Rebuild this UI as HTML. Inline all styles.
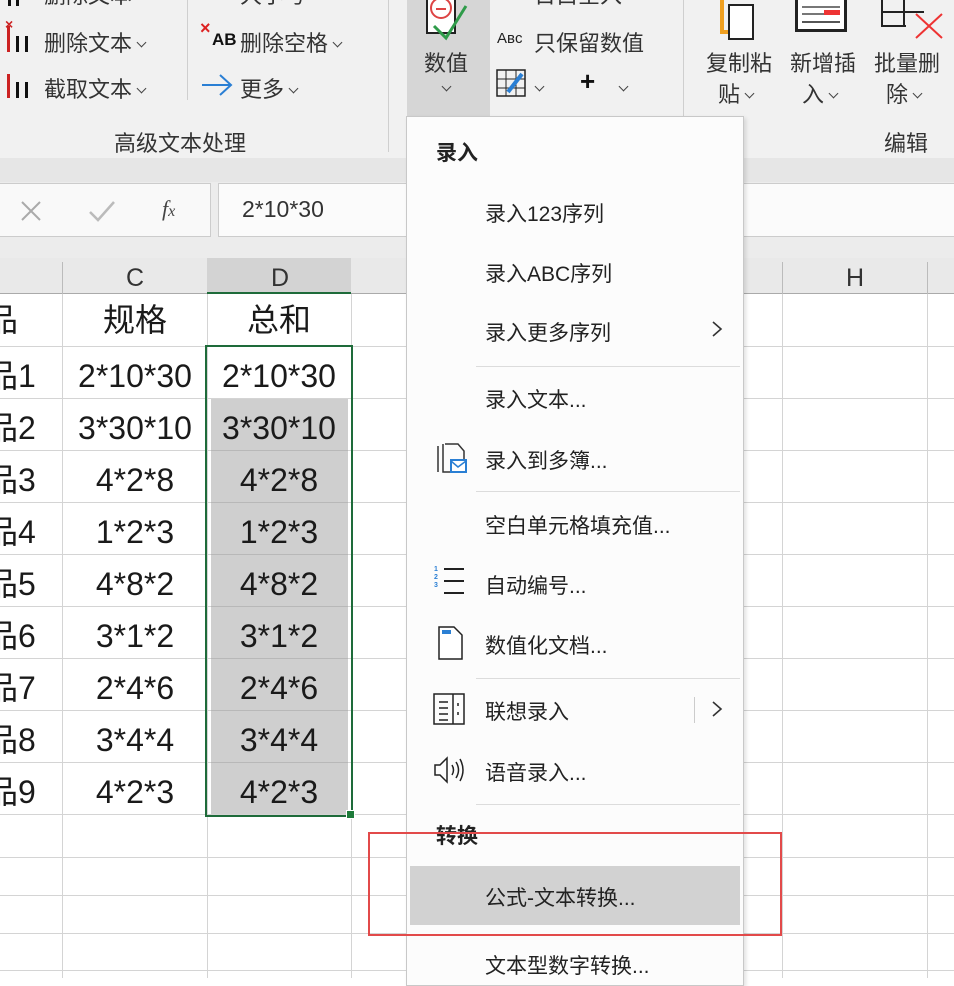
<!DOCTYPE html>
<html><head><meta charset="utf-8"><style>
*{margin:0;padding:0;box-sizing:border-box}
body{width:954px;height:978px;overflow:hidden;background:#fff;position:relative;font-family:"Liberation Sans","Noto Sans CJK SC",sans-serif;color:#222}
.a{position:absolute;white-space:nowrap}
.rb{font-size:22px;color:#333}
.vl{position:absolute;width:1px;background:#d4d4d4}
.hln{position:absolute;height:1px;background:#d4d4d4}
.cell{position:absolute;font-size:32px;text-align:center;line-height:52px;height:52px;color:#1a1a1a}
.mi{position:absolute;left:485px;font-size:21px;color:#222;white-space:nowrap}
.sep{position:absolute;left:476px;width:264px;height:1px;background:#dcdcdc}
.chev{display:inline-block;width:7px;height:7px;border-right:1.5px solid #444;border-bottom:1.5px solid #444;transform:rotate(45deg);vertical-align:middle;margin:-6px 0 0 6px}
</style></head><body>
<div class="a" style="left:0;top:0;width:954px;height:160px;background:#f1f1f1"></div>
<div class="a" style="left:0;top:158px;width:954px;height:24px;background:#e6e6e6"></div>
<div class="a" style="left:187px;top:0;width:1px;height:100px;background:#cfcfcf"></div>
<div class="a" style="left:388px;top:0;width:1px;height:152px;background:#cfcfcf"></div>
<div class="a" style="left:683px;top:0;width:1px;height:160px;background:#cfcfcf"></div>
<div class="a" style="left:407px;top:0;width:83px;height:116px;background:#d6d6d6"></div>
<div class="a rb" style="left:44px;top:-22px">删除文本</div>
<div class="a rb" style="left:240px;top:-22px">大小写</div>
<div class="a rb" style="left:534px;top:-22px">日白全入</div>
<div class="a" style="left:8px;top:0;width:3px;height:6px;background:#111"></div>
<div class="a" style="left:16px;top:0;width:3px;height:6px;background:#111"></div>
<div class="a" style="left:7px;top:26px;width:3px;height:26px;background:#c22"></div>
<div class="a" style="left:5px;top:16px;color:#c22;font-size:14px;font-weight:bold">×</div>
<div class="a" style="left:16px;top:36px;width:3px;height:16px;background:#111"></div>
<div class="a" style="left:25px;top:36px;width:3px;height:16px;background:#111"></div>
<div class="a" style="left:7px;top:74px;width:3px;height:24px;background:#c22"></div>
<div class="a" style="left:16px;top:82px;width:3px;height:16px;background:#111"></div>
<div class="a" style="left:25px;top:82px;width:3px;height:16px;background:#111"></div>
<div class="a rb" style="left:44px;top:26px">删除文本<span class="chev"></span></div>
<div class="a rb" style="left:44px;top:72px">截取文本<span class="chev"></span></div>
<div class="a" style="left:200px;top:18px;color:#d22;font-size:18px;font-weight:bold">×</div>
<div class="a" style="left:212px;top:30px;font-size:17px;font-weight:bold;color:#111">AB</div>
<div class="a rb" style="left:240px;top:26px">删除空格<span class="chev"></span></div>
<svg class="a" style="left:200px;top:72px" width="34" height="26"><path d="M2 13H30M20 3L31 13L20 23" stroke="#2a7fd4" stroke-width="2" fill="none"/></svg>
<div class="a rb" style="left:240px;top:72px">更多<span class="chev"></span></div>
<div class="a rb" style="left:114px;top:126px">高级文本处理</div>
<div class="a" style="left:426px;top:0;width:30px;height:34px;background:#fff;border:2px solid #222;border-top:none"></div>
<div class="a" style="left:430px;top:-3px;width:22px;height:22px;border:2px solid #d44;border-radius:50%"></div>
<div class="a" style="left:436px;top:8px;width:10px;height:2px;background:#d44"></div>
<svg class="a" style="left:430px;top:0" width="40" height="42"><path d="M4 26 L16 38 L36 6" stroke="#2f9c4a" stroke-width="3" fill="none"/></svg>
<div class="a rb" style="left:424px;top:46px">数值</div>
<div class="a" style="left:443px;top:78px"><span class="chev" style="margin:0"></span></div>
<div class="a" style="left:497px;top:30px;font-size:15px;color:#222">Aʙc</div>
<div class="a rb" style="left:534px;top:26px">只保留数值</div>
<svg class="a" style="left:496px;top:68px" width="32" height="30"><rect x="1" y="2" width="28" height="26" fill="none" stroke="#222" stroke-width="1.5"/><path d="M1 11H29M1 20H29M10 2V28M20 2V28" stroke="#222"/><path d="M12 24 L26 6" stroke="#2a7fd4" stroke-width="4"/></svg>
<div class="a" style="left:536px;top:78px"><span class="chev" style="margin:0"></span></div>
<div class="a" style="left:580px;top:66px;font-size:26px;font-weight:bold;color:#111">+</div>
<div class="a" style="left:620px;top:78px"><span class="chev" style="margin:0"></span></div>
<div class="a" style="left:720px;top:0;width:4px;height:34px;background:#f0a020"></div>
<div class="a" style="left:720px;top:30px;width:20px;height:4px;background:#f0a020"></div>
<div class="a" style="left:728px;top:4px;width:26px;height:36px;background:#fff;border:2px solid #222"></div>
<div class="a" style="left:795px;top:0;width:52px;height:32px;border:3px solid #222;border-top:none;background:#fff"></div>
<div class="a" style="left:802px;top:6px;width:38px;height:2px;background:#777"></div>
<div class="a" style="left:802px;top:13px;width:22px;height:2px;background:#777"></div>
<div class="a" style="left:824px;top:10px;width:16px;height:5px;background:#e33"></div>
<div class="a" style="left:802px;top:21px;width:38px;height:2px;background:#555"></div>
<svg class="a" style="left:880px;top:0" width="64" height="40"><path d="M2 0V26H26M2 12H44M24 0V26" stroke="#222" stroke-width="2" fill="none"/><path d="M36 14L62 38M62 14L36 38" stroke="#e33" stroke-width="2"/></svg>
<div class="a rb" style="left:706px;top:46px">复制粘</div>
<div class="a rb" style="left:718px;top:77px">贴<span class="chev"></span></div>
<div class="a rb" style="left:790px;top:46px">新增插</div>
<div class="a rb" style="left:802px;top:77px">入<span class="chev"></span></div>
<div class="a rb" style="left:874px;top:46px">批量删</div>
<div class="a rb" style="left:886px;top:77px">除<span class="chev"></span></div>
<div class="a rb" style="left:884px;top:126px">编辑</div>
<div class="a" style="left:0;top:182px;width:954px;height:76px;background:#ececec"></div>
<div class="a" style="left:-2px;top:183px;width:213px;height:54px;background:#f9f9f9;border:1px solid #ccc"></div>
<div class="a" style="left:218px;top:183px;width:740px;height:54px;background:#fbfbfb;border:1px solid #ccc"></div>
<svg class="a" style="left:20px;top:200px" width="22" height="22"><path d="M2 2L20 20M20 2L2 20" stroke="#aaa" stroke-width="2"/></svg>
<svg class="a" style="left:88px;top:200px" width="28" height="22"><path d="M2 12L10 20L26 2" stroke="#bbb" stroke-width="2.5" fill="none"/></svg>
<div class="a" style="left:162px;top:196px;font-size:22px;font-style:italic;font-family:'Liberation Serif',serif;color:#444">f<span style="font-size:16px">x</span></div>
<div class="a" style="left:242px;top:196px;font-size:23px;color:#333">2*10*30</div>
<div class="a" style="left:0;top:258px;width:954px;height:36px;background:#e9e9e9;border-bottom:1px solid #aaa"></div>
<div class="a" style="left:207px;top:258px;width:144px;height:36px;background:#d3d3d3;border-bottom:2px solid #1e6b3a"></div>
<div class="vl" style="left:62px;top:262px;height:32px;background:#bbb"></div>
<div class="vl" style="left:782px;top:262px;height:32px;background:#bbb"></div>
<div class="vl" style="left:927px;top:262px;height:32px;background:#bbb"></div>
<div class="a" style="left:126px;top:264px;font-size:25px;color:#333">C</div>
<div class="a" style="left:271px;top:264px;font-size:25px;color:#333">D</div>
<div class="a" style="left:846px;top:264px;font-size:25px;color:#333">H</div>
<div class="vl" style="left:62px;top:294px;height:684px"></div>
<div class="vl" style="left:207px;top:294px;height:684px"></div>
<div class="vl" style="left:351px;top:294px;height:684px"></div>
<div class="vl" style="left:782px;top:294px;height:684px"></div>
<div class="vl" style="left:927px;top:294px;height:684px"></div>
<div class="hln" style="left:0;top:346px;width:954px"></div>
<div class="hln" style="left:0;top:398px;width:954px"></div>
<div class="hln" style="left:0;top:450px;width:954px"></div>
<div class="hln" style="left:0;top:502px;width:954px"></div>
<div class="hln" style="left:0;top:554px;width:954px"></div>
<div class="hln" style="left:0;top:606px;width:954px"></div>
<div class="hln" style="left:0;top:658px;width:954px"></div>
<div class="hln" style="left:0;top:710px;width:954px"></div>
<div class="hln" style="left:0;top:762px;width:954px"></div>
<div class="hln" style="left:0;top:814px;width:954px"></div>
<div class="hln" style="left:0;top:857px;width:954px"></div>
<div class="hln" style="left:0;top:895px;width:954px"></div>
<div class="hln" style="left:0;top:933px;width:954px"></div>
<div class="hln" style="left:0;top:970px;width:954px"></div>
<div class="a" style="left:211px;top:399px;width:137px;height:415px;background:#cfcfcf"></div>
<div class="hln" style="left:211px;top:450px;width:137px;background:#b8b8b8"></div>
<div class="hln" style="left:211px;top:502px;width:137px;background:#b8b8b8"></div>
<div class="hln" style="left:211px;top:554px;width:137px;background:#b8b8b8"></div>
<div class="hln" style="left:211px;top:606px;width:137px;background:#b8b8b8"></div>
<div class="hln" style="left:211px;top:658px;width:137px;background:#b8b8b8"></div>
<div class="hln" style="left:211px;top:710px;width:137px;background:#b8b8b8"></div>
<div class="hln" style="left:211px;top:762px;width:137px;background:#b8b8b8"></div>
<div class="a" style="left:205px;top:345px;width:148px;height:472px;border:2px solid #1e6b3a"></div>
<div class="a" style="left:346px;top:810px;width:9px;height:9px;background:#1e7b3a;border:1px solid #fff"></div>
<div class="cell" style="left:-14px;top:294px;width:60px;text-align:left;font-size:32px">品</div>
<div class="cell" style="left:63px;top:294px;width:144px;font-size:32px">规格</div>
<div class="cell" style="left:207px;top:294px;width:144px;font-size:32px">总和</div>
<div class="cell" style="left:-14px;top:350px;text-align:left">品1</div>
<div class="cell" style="left:-14px;top:402px;text-align:left">品2</div>
<div class="cell" style="left:-14px;top:454px;text-align:left">品3</div>
<div class="cell" style="left:-14px;top:506px;text-align:left">品4</div>
<div class="cell" style="left:-14px;top:558px;text-align:left">品5</div>
<div class="cell" style="left:-14px;top:610px;text-align:left">品6</div>
<div class="cell" style="left:-14px;top:662px;text-align:left">品7</div>
<div class="cell" style="left:-14px;top:714px;text-align:left">品8</div>
<div class="cell" style="left:-14px;top:766px;text-align:left">品9</div>
<div class="cell" style="left:63px;top:350px;width:144px">2*10*30</div>
<div class="cell" style="left:63px;top:402px;width:144px">3*30*10</div>
<div class="cell" style="left:63px;top:454px;width:144px">4*2*8</div>
<div class="cell" style="left:63px;top:506px;width:144px">1*2*3</div>
<div class="cell" style="left:63px;top:558px;width:144px">4*8*2</div>
<div class="cell" style="left:63px;top:610px;width:144px">3*1*2</div>
<div class="cell" style="left:63px;top:662px;width:144px">2*4*6</div>
<div class="cell" style="left:63px;top:714px;width:144px">3*4*4</div>
<div class="cell" style="left:63px;top:766px;width:144px">4*2*3</div>
<div class="cell" style="left:207px;top:350px;width:144px">2*10*30</div>
<div class="cell" style="left:207px;top:402px;width:144px">3*30*10</div>
<div class="cell" style="left:207px;top:454px;width:144px">4*2*8</div>
<div class="cell" style="left:207px;top:506px;width:144px">1*2*3</div>
<div class="cell" style="left:207px;top:558px;width:144px">4*8*2</div>
<div class="cell" style="left:207px;top:610px;width:144px">3*1*2</div>
<div class="cell" style="left:207px;top:662px;width:144px">2*4*6</div>
<div class="cell" style="left:207px;top:714px;width:144px">3*4*4</div>
<div class="cell" style="left:207px;top:766px;width:144px">4*2*3</div>
<div class="a" style="left:406px;top:116px;width:338px;height:870px;background:#fcfcfc;border:1px solid #c8c8c8;box-shadow:2px 2px 4px rgba(0,0,0,.12)"></div>
<div class="a" style="left:436px;top:137px;font-size:21px;font-weight:bold;color:#222">录入</div>
<div class="mi" style="top:198px">录入123序列</div>
<div class="mi" style="top:258px">录入ABC序列</div>
<div class="mi" style="top:317px">录入更多序列</div>
<svg class="a" style="left:711px;top:320px" width="12" height="18"><path d="M2 2L10 9L2 16" stroke="#333" stroke-width="1.6" fill="none"/></svg>
<div class="sep" style="top:366px"></div>
<div class="mi" style="top:384px">录入文本...</div>
<svg class="a" style="left:436px;top:442px" width="34" height="34"><path d="M2 4V30M7 2V30H14M9 2H22L28 9V18" stroke="#333" stroke-width="1.5" fill="none"/><rect x="15" y="18" width="15" height="12" fill="#fff" stroke="#2a7fd4" stroke-width="2"/><path d="M15 19L22 25L30 19" stroke="#2a7fd4" stroke-width="1.5" fill="none"/></svg>
<div class="mi" style="top:445px">录入到多簿...</div>
<div class="sep" style="top:491px"></div>
<div class="mi" style="top:510px">空白单元格填充值...</div>
<div class="a" style="left:434px;top:566px;font-size:7px;line-height:8px;color:#2a7fd4;font-weight:bold">1<br>2<br>3</div>
<div class="a" style="left:444px;top:568px;width:20px;height:2px;background:#222"></div>
<div class="a" style="left:444px;top:580px;width:20px;height:2px;background:#222"></div>
<div class="a" style="left:444px;top:592px;width:20px;height:2px;background:#222"></div>
<div class="mi" style="top:570px">自动编号...</div>
<svg class="a" style="left:438px;top:626px" width="26" height="34"><path d="M1 1H16L24 9V33H1Z" fill="#fff" stroke="#222" stroke-width="1.5"/><rect x="4" y="4" width="9" height="4" fill="#2a7fd4"/></svg>
<div class="mi" style="top:630px">数值化文档...</div>
<div class="sep" style="top:678px"></div>
<svg class="a" style="left:433px;top:693px" width="32" height="32"><rect x="1" y="1" width="30" height="30" fill="none" stroke="#222" stroke-width="1.5"/><path d="M20 1V31M6 9H15M6 15H15M6 21H15M6 27H15M25 10V13M25 19V22" stroke="#222" stroke-width="1.5"/></svg>
<div class="mi" style="top:696px">联想录入</div>
<div class="a" style="left:694px;top:697px;width:1px;height:26px;background:#ccc"></div>
<svg class="a" style="left:711px;top:700px" width="12" height="18"><path d="M2 2L10 9L2 16" stroke="#333" stroke-width="1.6" fill="none"/></svg>
<svg class="a" style="left:433px;top:756px" width="34" height="28"><path d="M2 9H7L14 2V26L7 19H2Z" fill="none" stroke="#222" stroke-width="1.5"/><path d="M19 9Q22 14 19 19M23 6Q28 14 23 22M27 3Q33 14 27 25" fill="none" stroke="#222" stroke-width="1.5"/></svg>
<div class="mi" style="top:757px">语音录入...</div>
<div class="sep" style="top:804px"></div>
<div class="a" style="left:436px;top:820px;font-size:21px;font-weight:bold;color:#222">转换</div>
<div class="a" style="left:410px;top:866px;width:330px;height:59px;background:#d2d2d2"></div>
<div class="mi" style="top:882px">公式-文本转换...</div>
<div class="mi" style="top:950px">文本型数字转换...</div>
<div class="a" style="left:368px;top:832px;width:414px;height:104px;border:2px solid #e24a4a"></div>
</body></html>
